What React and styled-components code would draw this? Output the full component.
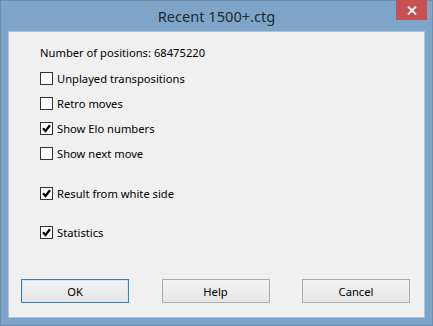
import React from "react";
import styled, { createGlobalStyle } from "styled-components";

const Global = createGlobalStyle`
  html, body { margin: 0; padding: 0; background: #7ea5c7; }
  * { box-sizing: border-box; }
`;

const Window = styled.div`
  width: 433px;
  height: 326px;
  background: #7ea5c7;
  border: 1px solid #6a8fb0;
  display: flex;
  flex-direction: column;
  font-family: "Noto Sans", "Open Sans", sans-serif;
`;

const TitleBar = styled.div`
  height: 30px;
  display: grid;
  grid-template-columns: 1fr auto 1fr;
  align-items: start;
`;

const Title = styled.div`
  grid-column: 2;
  padding-top: 6px;
  font-size: 14.6px;
  line-height: 18px;
  color: #1d2b38;
  font-family: "Noto Sans", sans-serif;
`;

const CloseButton = styled.div`
  grid-column: 3;
  justify-self: end;
  margin-top: -1px;
  margin-right: 5px;
  width: 31px;
  height: 20px;
  background: #c75050;
  display: flex;
  align-items: center;
  justify-content: center;
`;

const Client = styled.div`
  flex: 1;
  margin: 0 7px 7px 7px;
  background: #f0f0f0;
  border: 1px solid #aac3da;
  display: flex;
  flex-direction: column;
  padding: 0 0 14px 0;
`;

const Options = styled.div`
  display: flex;
  flex-direction: column;
  gap: 5px;
  padding: 10px 0 0 31px;
`;

const Line = styled.div`
  height: 20px;
  display: flex;
  align-items: center;
  gap: 4px;
  margin-top: ${(p) => p.$extra || 0}px;
  font-size: 11.2px;
  color: #000;
`;

const Box = styled.span`
  width: 13px;
  height: 13px;
  border: 1px solid #333;
  background: #fff;
  display: flex;
  align-items: center;
  justify-content: center;
`;

const Buttons = styled.div`
  margin-top: auto;
  display: flex;
  justify-content: space-between;
  padding: 0 14px 0 12px;
`;

const Button = styled.div`
  width: 108px;
  height: 24px;
  display: flex;
  align-items: center;
  justify-content: center;
  font-size: 11.2px;
  color: #000;
  background: linear-gradient(#f2f2f2, #e6e6e6);
  border: 1px solid ${(p) => (p.$default ? "#3c7fb1" : "#acacac")};
  box-shadow: ${(p) => (p.$default ? "inset 0 0 0 1px #d4e6f5" : "none")};
`;

const Check = ({ checked, label, extra }) => (
  <Line $extra={extra}>
    <Box>
      {checked && (
        <svg width="9" height="9" viewBox="0 0 9 9">
          <path d="M1 4.3 L3.5 7 L8 1.3" fill="none" stroke="#000" strokeWidth="2.3" />
        </svg>
      )}
    </Box>
    {label}
  </Line>
);

export default function App() {
  return (
    <>
      <Global />
      <Window>
        <TitleBar>
          <Title>Recent 1500+.ctg</Title>
          <CloseButton>
            <svg width="10" height="9" viewBox="0 0 10 9">
              <path d="M1 0.5 L9 8.5 M9 0.5 L1 8.5" stroke="#fff" strokeWidth="1.8" />
            </svg>
          </CloseButton>
        </TitleBar>
        <Client>
          <Options>
            <Line>Number of positions: 68475220</Line>
            <Check extra={1} label="Unplayed transpositions" />
            <Check label="Retro moves" />
            <Check checked label="Show Elo numbers" />
            <Check label="Show next move" />
            <Check checked extra={15} label="Result from white side" />
            <Check checked extra={14} label="Statistics" />
          </Options>
          <Buttons>
            <Button $default>OK</Button>
            <Button>Help</Button>
            <Button>Cancel</Button>
          </Buttons>
        </Client>
      </Window>
    </>
  );
}
